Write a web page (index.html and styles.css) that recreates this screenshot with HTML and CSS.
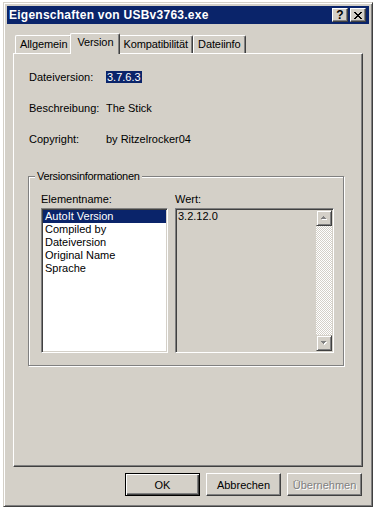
FILE: index.html
```html
<!DOCTYPE html>
<html lang="de">
<head>
    <meta charset="UTF-8">
    <title>Eigenschaften von USBv3763.exe</title>
    <link rel="stylesheet" href="styles.css">
</head>
<body>
    <div class="window">
        <div class="titlebar">
            <span class="title">Eigenschaften von USBv3763.exe</span>
            <div class="caption-buttons">
                <div class="caption-btn help">?</div>
                <div class="caption-btn close">
                    <svg width="8" height="7" viewBox="0 0 8 7">
                        <path d="M0 0h2v1H0zM6 0h2v1H6zM1 1h2v1H1zM5 1h2v1H5zM2 2h4v1H2zM3 3h2v1H3zM2 4h4v1H2zM1 5h2v1H1zM5 5h2v1H5zM0 6h2v1H0zM6 6h2v1H6z" fill="#000"/>
                    </svg>
                </div>
            </div>
        </div>

        <div class="tabs">
            <div class="tab">Allgemein</div>
            <div class="tab active">Version</div>
            <div class="tab">Kompatibilität</div>
            <div class="tab">Dateiinfo</div>
        </div>

        <div class="panel">
            <div class="info">
                <div class="info-label">Dateiversion:</div>
                <div class="info-value"><span class="selected">3.7.6.3</span></div>
                <div class="info-label">Beschreibung:</div>
                <div class="info-value">The Stick</div>
                <div class="info-label">Copyright:</div>
                <div class="info-value">by Ritzelrocker04</div>
            </div>

            <fieldset class="group">
                <legend>Versionsinformationen</legend>
                <div class="columns">
                    <div class="column">
                        <div class="field-label">Elementname:</div>
                        <div class="listbox">
                            <div class="item selected-item">AutoIt Version</div>
                            <div class="item">Compiled by</div>
                            <div class="item">Dateiversion</div>
                            <div class="item">Original Name</div>
                            <div class="item">Sprache</div>
                        </div>
                    </div>
                    <div class="column">
                        <div class="field-label">Wert:</div>
                        <div class="valuebox">
                            <div class="value-text">3.2.12.0</div>
                            <div class="scrollbar">
                                <div class="scroll-btn">
                                    <svg width="14" height="14" viewBox="0 0 14 14">
                                        <path d="M7 6h1v1h1v1h1v1H5V8h1V7h1z" fill="#fff"/>
                                        <path d="M6 5h1v1h1v1h1v1H4V7h1V6h1z" fill="#808080"/>
                                    </svg>
                                </div>
                                <div class="scroll-track"></div>
                                <div class="scroll-btn">
                                    <svg width="14" height="14" viewBox="0 0 14 14">
                                        <path d="M5 6h5v1H9v1H8v1H7V8H6V7H5z" fill="#fff"/>
                                        <path d="M4 5h5v1H8v1H7v1H6V7H5V6H4z" fill="#808080"/>
                                    </svg>
                                </div>
                            </div>
                        </div>
                    </div>
                </div>
            </fieldset>
        </div>

        <div class="buttons">
            <div class="button default">OK</div>
            <div class="button">Abbrechen</div>
            <div class="button disabled">Übernehmen</div>
        </div>
    </div>
</body>
</html>
```

FILE: styles.css
```css
body {
    margin: 0;
    background-color: #fff;
    font-family: "Liberation Sans", Arial, sans-serif;
    font-size: 11px;
    color: #000;
}

.window {
    box-sizing: border-box;
    width: 370px;
    height: 505px;
    margin: 2px 0 0 3px;
    padding: 3px;
    background-color: #d4d0c8;
    border: 1px solid;
    border-color: #d4d0c8 #404040 #404040 #d4d0c8;
    box-shadow: inset 1px 1px #fff, inset -1px -1px #808080;
}

/* Titelleiste */
.titlebar {
    display: flex;
    align-items: flex-start;
    justify-content: space-between;
    height: 18px;
    background-color: #0a246a;
    color: #fff;
}

.title {
    font-weight: bold;
    font-size: 12px;
    letter-spacing: 0.25px;
    line-height: 18px;
    padding-left: 2px;
}

.caption-buttons {
    display: flex;
    gap: 2px;
    margin: 2px 3px 0 0;
}

.caption-btn {
    box-sizing: border-box;
    width: 16px;
    height: 14px;
    display: flex;
    align-items: center;
    justify-content: center;
    background-color: #d4d0c8;
    color: #000;
    font-weight: bold;
    font-size: 12px;
    line-height: 12px;
    border: 1px solid;
    border-color: #fff #404040 #404040 #fff;
    box-shadow: inset -1px -1px #808080;
}

/* Registerkarten */
.tabs {
    display: flex;
    align-items: flex-end;
    margin: 9px 0 0 8px;
}

.tab {
    box-sizing: border-box;
    height: 18px;
    padding: 0 4px;
    line-height: 16px;
    letter-spacing: -0.1px;
    border-top: 1px solid #fff;
    border-left: 1px solid #fff;
    border-right: 1px solid #404040;
    border-top-left-radius: 2px;
    border-top-right-radius: 2px;
    box-shadow: inset -1px 0 #808080;
}

.tab.active {
    position: relative;
    z-index: 1;
    height: 21px;
    margin: 0 -2px -1px;
    padding: 0 6px;
    line-height: 17px;
    background-color: #d4d0c8;
}

.panel {
    box-sizing: border-box;
    width: 350px;
    height: 414px;
    margin-left: 6px;
    padding: 17px 0 0 14px;
    border: 1px solid;
    border-color: #fff #404040 #404040 #fff;
    box-shadow: inset -1px -1px #808080;
}

.info {
    display: grid;
    grid-template-columns: 77px auto;
    row-gap: 18px;
    padding-left: 1px;
    line-height: 13px;
}

.info-value {
    white-space: nowrap;
}

.selected {
    background-color: #0a246a;
    color: #fff;
    padding: 0 1px;
}

/* Gruppenfeld */
.group {
    box-sizing: border-box;
    width: 316px;
    margin: 24px 0 0 0;
    padding: 10px 0 12px 12px;
    min-inline-size: 0;
    border: 1px solid #808080;
    box-shadow: inset 1px 1px #fff, 1px 1px #fff;
}

.group legend {
    padding: 0 2px;
    margin-left: -6px;
    line-height: 13px;
    letter-spacing: -0.3px;
    background-color: #d4d0c8;
}

.columns {
    display: grid;
    grid-template-columns: 127px 159px;
    column-gap: 7px;
}

.field-label {
    line-height: 13px;
    margin-bottom: 2px;
}

.listbox,
.valuebox {
    box-sizing: border-box;
    height: 145px;
    border: 1px solid;
    border-color: #808080 #fff #fff #808080;
    box-shadow: inset 1px 1px #404040, inset -1px -1px #d4d0c8;
    padding: 1px;
}

.listbox {
    background-color: #fff;
}

.item {
    line-height: 13px;
    padding-left: 2px;
}

.selected-item {
    background-color: #0a246a;
    color: #fff;
}

.valuebox {
    display: flex;
    background-color: #d4d0c8;
}

.value-text {
    flex: 1;
    line-height: 13px;
    padding-left: 1px;
}

.scrollbar {
    display: flex;
    flex-direction: column;
    width: 16px;
}

.scroll-btn {
    box-sizing: border-box;
    width: 16px;
    height: 16px;
    background-color: #d4d0c8;
    border: 1px solid;
    border-color: #d4d0c8 #404040 #404040 #d4d0c8;
    box-shadow: inset 1px 1px #fff, inset -1px -1px #808080;
}

.scroll-btn svg {
    display: block;
}

.scroll-track {
    flex: 1;
    background: repeating-conic-gradient(#fff 0 25%, #d4d0c8 0 50%) 0 0 / 2px 2px;
}

/* Schaltflächen */
.buttons {
    display: flex;
    justify-content: flex-end;
    gap: 6px;
    margin: 6px 7px 0 0;
}

.button {
    box-sizing: border-box;
    width: 75px;
    height: 23px;
    display: flex;
    align-items: center;
    justify-content: center;
    border: 1px solid;
    border-color: #fff #404040 #404040 #fff;
    box-shadow: inset -1px -1px #808080;
}

.button.default {
    border-color: #000;
    box-shadow: inset 1px 1px #fff, inset -1px -1px #404040, inset -2px -2px #808080;
}

.button.disabled {
    color: #808080;
    text-shadow: 1px 1px #fff;
}
```
